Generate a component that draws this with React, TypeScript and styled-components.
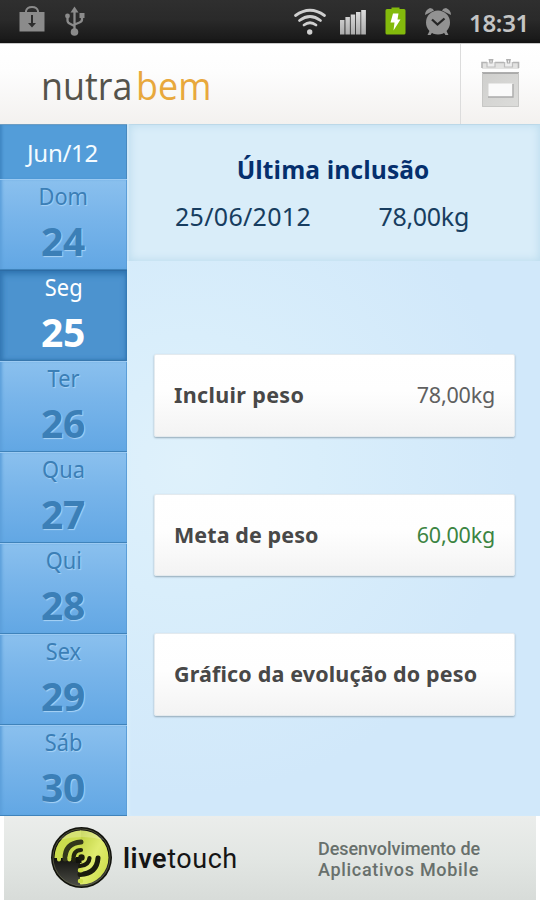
import React from "react";
import styled, { createGlobalStyle, css } from "styled-components";

const GlobalStyle = createGlobalStyle`
  * { box-sizing: border-box; }
  body { margin: 0; background: #fff; font-family: "Noto Sans", "Open Sans", sans-serif; }
`;

const Screen = styled.div`
  width: 540px;
  height: 900px;
  display: flex;
  flex-direction: column;
  overflow: hidden;
`;

const StatusBar = styled.div`
  height: 43px;
  flex: none;
  display: flex;
  align-items: flex-start;
  background: linear-gradient(#2f2f2f, #2a2a2a 45%, #1a1a1a 90%, #111);
  padding: 0 11px 0 18px;
  > svg { flex: none; }
`;

const StatusIcons = styled.div`
  flex: 1;
  height: 43px;
  svg { display: block; }
`;

const Clock = styled.div`
  width: 69px;
  display: flex;
  justify-content: flex-end;
  font-size: 24px;
  line-height: 45px;
  font-weight: 600;
  letter-spacing: -0.3px;
  color: #c4c4c4;
`;

const Header = styled.header`
  height: 81px;
  flex: none;
  display: flex;
  background: linear-gradient(#fff, #fdfdfd 35%, #f3f1ef);
  border-top: 1px solid #c9c9c9;
`;

const Brand = styled.div`
  flex: 1;
  display: flex;
  padding-left: 41px;
  font-family: "Open Sans", sans-serif;
  font-size: 39px;
  line-height: 81px;
  transform: scaleX(0.92);
  transform-origin: 41px 50%;
`;

const BrandWord = styled.span<{ $accent?: boolean }>`
  color: ${(p) => (p.$accent ? "#e8a83c" : "#55534b")};
  margin-left: ${(p) => (p.$accent ? "4px" : "0")};
`;

const CalendarButton = styled.div`
  width: 80px;
  border-left: 1px solid #dcdcdc;
  svg { display: block; }
`;

const Body = styled.div`
  flex: none;
  height: 692px;
  display: flex;
`;

const Sidebar = styled.nav`
  width: 127px;
  flex: none;
  display: flex;
  flex-direction: column;
`;

const Month = styled.div`
  height: 55px;
  background: #539dd9;
  border-top: 1px solid #6d9dc2;
  color: #f4fbff;
  font-size: 24px;
  line-height: 55px;
  letter-spacing: -0.3px;
  text-align: center;
  padding-right: 2px;
  box-shadow: inset 3px 0 3px -1px #3f86c2, inset -1px 0 #4789bf;
`;

const Day = styled.div<{ $active?: boolean }>`
  height: 91px;
  display: flex;
  flex-direction: column;
  align-items: center;
  border-top: 1px solid #9bcaf2;
  border-bottom: 1px solid #3f83bb;
  background: linear-gradient(#8ac0ee, #79b5ea 40%, #62a7e4);
  color: #3b7fb7;
  text-shadow: 1px 1px 1px #a9d3f6;
  box-shadow: inset 3px 0 3px -1px #5c9fda, inset -1px 0 #5b9ed8;
  ${(p) =>
    p.$active &&
    css`
      background: #4c93cf;
      border-top-color: #2d6ca5;
      border-bottom-color: #3777ae;
      color: #fff;
      text-shadow: none;
      box-shadow: inset 0 3px 6px #2f74b0, inset 3px 0 5px -1px #3579b4, inset -1px 0 2px #3579b4;
    `}
`;

const DayName = styled.div`
  font-size: 24px;
  line-height: 31px;
  height: 33px;
  transform: scaleX(0.91);
`;

const DayNumber = styled.div`
  font-size: 39px;
  font-weight: 700;
  line-height: 56px;
  letter-spacing: -0.4px;
  padding-right: 1px;
`;

const Main = styled.main`
  flex: 1;
  display: flex;
  flex-direction: column;
  background: radial-gradient(circle at 60px 340px, #dff1fb 0, #d9eefb 130px, #d1e8fa 330px);
  box-shadow: inset 3px 0 3px -1px #d9f0fd;
`;

const Summary = styled.section`
  height: 137px;
  display: flex;
  flex-direction: column;
  align-items: center;
  padding-top: 27px;
  background: #d9edf9;
  border-left: 2px solid #cfe8f8;
  box-shadow: inset 0 0 9px 1px #bcdcee, inset 0 1px #bcd3e0;
`;

const SummaryTitle = styled.div`
  font-family: "Open Sans", sans-serif;
  font-size: 24.5px;
  line-height: 38px;
  font-weight: 700;
  color: #052f6d;
  letter-spacing: 0.1px;
  padding-right: 3px;
`;

const SummaryValues = styled.div`
  display: flex;
  width: 294px;
  justify-content: space-between;
  margin-right: 25px;
  font-size: 25px;
  line-height: 54px;
  letter-spacing: 0.3px;
  color: #173d60;
`;

const Weight = styled.span`
  letter-spacing: -0.3px;
`;

const Cards = styled.div`
  display: flex;
  flex-direction: column;
  gap: 57px;
  padding: 93px 25px 0 27px;
`;

const Card = styled.div`
  height: 82.5px;
  display: flex;
  justify-content: space-between;
  align-items: center;
  padding: 0 19px 1px 19px;
  border: 1px solid #e4eaee;
  border-radius: 2px;
  background: linear-gradient(#fff, #fefefe 45%, #f3f3f3);
  box-shadow: 0 1px 2px #93a9b8;
  white-space: nowrap;
`;

const CardLabel = styled.span<{ $spacing?: string }>`
  font-size: 21.5px;
  font-weight: 700;
  letter-spacing: ${(p) => p.$spacing || "0"};
  color: #484848;
`;

const CardValue = styled.span<{ $goal?: boolean }>`
  font-size: 21.5px;
  letter-spacing: -0.2px;
  color: ${(p) => (p.$goal ? "#3c8442" : "#606060")};
`;

const Footer = styled.footer`
  flex: 1;
  display: flex;
  border: solid #fff;
  border-width: 0 4px;
  background: linear-gradient(#ebedeb, #e2e6e3 50%, #d7dbd8);
  font-family: Roboto, sans-serif;
  padding-left: 46px;
  svg { display: block; flex: none; }
`;

const Vendor = styled.div`
  width: 206px;
  padding-left: 11px;
  font-size: 27px;
  line-height: 87px;
  letter-spacing: 0.55px;
  color: #151515;
  white-space: nowrap;
  b { font-weight: 600; }
`;

const Tagline = styled.div`
  padding-top: 23px;
  font-size: 18px;
  line-height: 20.5px;
  font-weight: 500;
  color: #68706c;
  white-space: nowrap;
`;

const TagLine = styled.div<{ $spacing: string }>`
  letter-spacing: ${(p) => p.$spacing};
`;

const NotificationGlyphs = () => (
  <svg width="70" height="43" viewBox="18 0 70 43">
    <g fill="#8b8b8b">
      <path d="M19.500 12H44.500V31.500H19.500Z" />
      <path d="M26 13V11Q27 7 32 7T38 11V13" fill="none" stroke="#8b8b8b" strokeWidth="2" />
      <path d="M31 15h2v8h3l-4 4.500l-4-4.500h3z" fill="#2d2d2d" />
      <circle cx="74.500" cy="32" r="3.800" />
      <path d="M74.500 6.500l4 6h-8z" />
      <circle cx="67.500" cy="16" r="2.400" />
      <path d="M79.500 13h5v5h-5z" />
    </g>
    <path d="M74.500 10V31M67.500 17v3.500q0 2 2.500 3.200l4.500 2.300M82 17v2.500q0 2-2.500 3l-5 2" fill="none" stroke="#8b8b8b" strokeWidth="2.300" />
  </svg>
);

const SystemGlyphs = () => (
  <svg width="170" height="43" viewBox="290 0 170 43">
    <defs>
      <linearGradient id="bars" x2="0" y2="1">
        <stop stopColor="#ddd" /><stop offset="1" stopColor="#aaa" />
      </linearGradient>
    </defs>
    <g fill="none" stroke="#cfcfcf" strokeWidth="2.800" strokeLinecap="round">
      <path d="M295.500 15.500Q310 5 324.500 15.500M299.500 20.500Q310 12.500 320.500 20.500M304 25Q310 20.500 316 25" />
    </g>
    <circle cx="309.700" cy="32" r="2.700" fill="#cfcfcf" />
    <g fill="url(#bars)">
      <path d="M340 20h4.500v14.500H340zM345.400 17h4.500v17.500h-4.500zM350.700 14.500h4.500v20h-4.500zM356 12h4.500v22.500H356z" />
      <path d="M361.200 10h4.700v24.500h-4.700z" />
    </g>
    <path d="M387 9h4.500V7.500h8V9h4.500q1.500 0 1.500 1.500V33q0 1.500-1.500 1.500h-17q-1.500 0-1.500-1.500V10.500Q385.500 9 387 9z" fill="#83ba0c" />
    <path d="M393 13.500h5.500l-1 6h3l-7 11l1-8h-4z" fill="#fff" />
    <g fill="#929292">
      <path d="M425 15q0-5 5-7q3 0 4 2.500zM451 15q0-5-5-7q-3 0-4 2.500z" />
      <path d="M430 30l-2.500 5h3l2-3zM446 30l2.500 5h-3l-2-3z" />
      <circle cx="438" cy="22.500" r="12" />
    </g>
    <path d="M432 19.500l5.500 5l7-6" fill="none" stroke="#262626" strokeWidth="2.300" />
  </svg>
);

const CalendarGlyph = () => (
  <svg width="79" height="80" viewBox="461 44 79 80">
    <defs>
      <linearGradient id="page" x2="1" y2="1">
        <stop stopColor="#cfcfcd" /><stop offset="1" stopColor="#dcdcda" />
      </linearGradient>
    </defs>
    <path d="M482 62h37v7h-37z" fill="#e2e2e1" />
    <path d="M482 68v-5.500h5M495 62.500h9M513 62.500h5.500V68" fill="none" stroke="#b4b4b4" strokeWidth="1.600" />
    <path d="M487 62v5h8v-5M504.500 62v5h8v-5" fill="#eee" stroke="#bebebe" strokeWidth="1.200" />
    <path d="M488.500 59h5l-1 4.500h-3zM506 59h5l-1 4.500h-3z" fill="#b0b0b0" />
    <path d="M490.500 60.500h1v2h-1zM508 60.500h1v2h-1z" fill="#f1f1f1" />
    <path d="M482 72.500h37V107h-37z" fill="url(#page)" />
    <path d="M482 73h37" stroke="#9b9b9b" strokeWidth="1.500" />
    <path d="M482.500 73v33.500h36V73" fill="none" stroke="#c7c7c5" />
    <path d="M488.500 83.500h24V97h-24z" fill="#fafafa" />
    <path d="M488 97h25V84" fill="none" stroke="#aaa" strokeWidth="1.300" />
  </svg>
);

const VendorMark = () => (
  <svg width="62" height="84" viewBox="50 816 62 84">
    <defs>
      <linearGradient id="lime" x2="1" y2="1">
        <stop stopColor="#b9cc38" /><stop offset=".45" stopColor="#e0ec70" /><stop offset="1" stopColor="#c3d735" />
      </linearGradient>
      <linearGradient id="dark" x2="0" y2="1">
        <stop offset=".45" stopColor="#0b0b09" /><stop offset="1" stopColor="#4c4d46" />
      </linearGradient>
      <clipPath id="disc"><circle cx="81.500" cy="857.500" r="27" /></clipPath>
    </defs>
    <circle cx="81.500" cy="857.500" r="30.500" fill="#11120c" />
    <circle cx="81.500" cy="857.500" r="28.500" fill="url(#dark)" stroke="#777b5b" strokeWidth=".6" />
    <g clipPath="url(#disc)">
      <path d="M80 857V827H112V889H80Z" fill="url(#lime)" />
      <path d="M54 858V827H81V858Z" fill="#cbdc4d" />
      <g fill="none" strokeLinecap="round">
        <path d="M65 859Q65 843 81 842" stroke="#34371b" strokeWidth="5" />
        <path d="M73.500 860Q73 850 81 850" stroke="#24260f" strokeWidth="4.200" />
        <path d="M98 858Q97 873.500 80 874.500" stroke="#1b1c0d" strokeWidth="5" />
        <path d="M89.500 858Q89 865 80 866" stroke="#1b1c0d" strokeWidth="4.200" />
        <path d="M59 858v1.500M69.300 858v1.500" stroke="#cbdc4d" strokeWidth="4" />
        <path d="M81 870.300h-1M81 881h-1" stroke="#cfe04b" strokeWidth="4.500" />
      </g>
      <path d="M76 857h5.500v6H76z" fill="#11120c" />
      <circle cx="81.500" cy="857.500" r="3.200" fill="#1b1c0d" />
    </g>
    <path d="M59 840Q81 820 104 840Q82 834 59 840Z" fill="#fff" opacity=".22" />
  </svg>
);

const days = [
  { name: "Dom", number: 24 },
  { name: "Seg", number: 25, active: true },
  { name: "Ter", number: 26 },
  { name: "Qua", number: 27 },
  { name: "Qui", number: 28 },
  { name: "Sex", number: 29 },
  { name: "Sáb", number: 30 },
];

export default function App() {
  return (
    <Screen>
      <GlobalStyle />
      <StatusBar>
        <StatusIcons><NotificationGlyphs /></StatusIcons>
        <SystemGlyphs />
        <Clock>18:31</Clock>
      </StatusBar>
      <Header>
        <Brand>
          <BrandWord>nutra</BrandWord>
          <BrandWord $accent>bem</BrandWord>
        </Brand>
        <CalendarButton><CalendarGlyph /></CalendarButton>
      </Header>
      <Body>
        <Sidebar>
          <Month>Jun/12</Month>
          {days.map((d) => (
            <Day key={d.number} $active={d.active}>
              <DayName>{d.name}</DayName>
              <DayNumber>{d.number}</DayNumber>
            </Day>
          ))}
        </Sidebar>
        <Main>
          <Summary>
            <SummaryTitle>Última inclusão</SummaryTitle>
            <SummaryValues>
              <span>25/06/2012</span>
              <Weight>78,00kg</Weight>
            </SummaryValues>
          </Summary>
          <Cards>
            <Card>
              <CardLabel $spacing="0.35px">Incluir peso</CardLabel>
              <CardValue>78,00kg</CardValue>
            </Card>
            <Card>
              <CardLabel $spacing="0.08px">Meta de peso</CardLabel>
              <CardValue $goal>60,00kg</CardValue>
            </Card>
            <Card>
              <CardLabel $spacing="0.15px">Gráfico da evolução do peso</CardLabel>
            </Card>
          </Cards>
        </Main>
      </Body>
      <Footer>
        <VendorMark />
        <Vendor><b>live</b>touch</Vendor>
        <Tagline>
          <TagLine $spacing="-0.05px">Desenvolvimento de</TagLine>
          <TagLine $spacing="0.7px">Aplicativos Mobile</TagLine>
        </Tagline>
      </Footer>
    </Screen>
  );
}
